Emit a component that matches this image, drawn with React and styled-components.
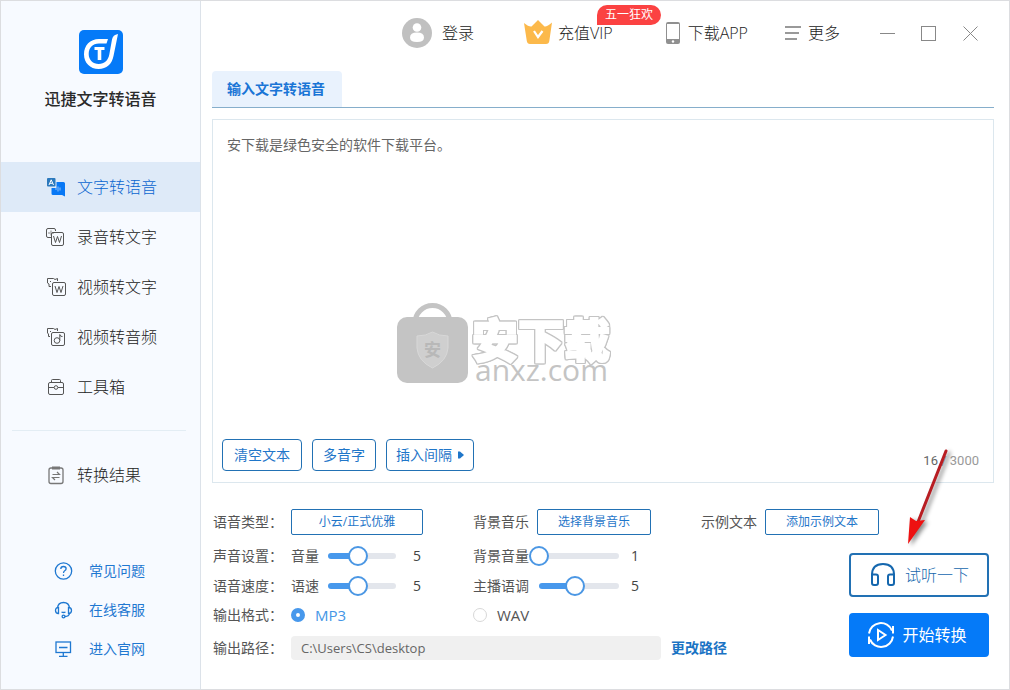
import React, { useState } from "react";
import styled, { createGlobalStyle } from "styled-components";

const GlobalStyle = createGlobalStyle`
  * {
    box-sizing: border-box;
  }
  body {
    margin: 0;
    background: #fff;
    color: #333;
    font-family: "Open Sans", "Noto Sans CJK SC", sans-serif;
    font-size: 14px;
    line-height: 20px;
  }
  button, input, textarea {
    font: inherit;
    color: inherit;
  }
  button {
    padding: 0;
    border: 0;
    background: none;
    cursor: pointer;
  }
  svg {
    display: block;
    flex: none;
  }
`;

const Window = styled.div`
  display: flex;
  min-height: 100vh;
  border: 1px solid #dcdde0;
`;

const Sidebar = styled.aside`
  flex: none;
  display: flex;
  flex-direction: column;
  width: 200px;
  background: #f7faff;
  border-right: 1px solid #dce2e9;
`;

const Brand = styled.div`
  display: flex;
  flex-direction: column;
  align-items: center;
  gap: 14px;
  height: 161px;
  padding-top: 29px;

  h1 {
    margin: 0;
    font-size: 16px;
    font-weight: 500;
    line-height: 22px;
    color: #2a2a2a;
  }
`;

const NavItem = styled.button`
  display: flex;
  align-items: center;
  gap: 11px;
  width: 100%;
  height: 50px;
  padding-left: 45px;
  font-size: 16px;
  font-weight: 300;
  color: ${({ $active }) => ($active ? "#0a66d0" : "#222")};
  background: ${({ $active }) => ($active ? "#deeaf8" : "transparent")};
`;

const Divider = styled.hr`
  width: 174px;
  margin: 18px 0 19px 11px;
  border: 0;
  border-top: 1px solid #e3edf4;
`;

const HelpLinks = styled.div`
  display: flex;
  flex-direction: column;
  gap: 19px;
  margin-top: auto;
  padding: 0 0 30px 52px;

  a {
    display: flex;
    align-items: center;
    gap: 16px;
    color: #1f78d1;
    text-decoration: none;
  }
`;

const Main = styled.main`
  flex: 1;
  display: flex;
  flex-direction: column;
  min-width: 0;
  padding: 0 15px 0 11px;
`;

const TopBar = styled.header`
  display: flex;
  justify-content: flex-end;
  align-items: center;
  height: 64px;
  font-size: 16px;
`;

const TopButton = styled.button`
  position: relative;
  display: flex;
  align-items: center;
  gap: ${({ $gap }) => $gap || 7}px;
  margin-right: ${({ $after }) => $after}px;
  font-weight: 300;
  color: #222;
`;

const Badge = styled.span`
  position: absolute;
  top: -14px;
  left: 73px;
  width: 64px;
  height: 20px;
  border-radius: 10px 10px 10px 0;
  background: #fb4242;
  color: #fff;
  font-size: 12px;
  font-weight: 400;
  line-height: 20px;
  text-align: center;
`;

const Tabs = styled.div`
  display: flex;
  margin-top: 6px;
  border-bottom: 1px solid #86aecb;
`;

const Tab = styled.button`
  height: 36px;
  padding: 0 17px 0 15px;
  border-radius: 4px 4px 0 0;
  background: #e9f2fd;
  color: #1a75d6;
  font-weight: 700;
`;

const Editor = styled.section`
  position: relative;
  flex: 1;
  display: flex;
  flex-direction: column;
  margin-top: 11px;
  border: 1px solid #dce7ee;

  textarea {
    flex: 1;
    width: 100%;
    padding: 15px 14px;
    border: 0;
    outline: 0;
    resize: none;
    background: transparent;
    color: #666;
  }
`;

const Watermark = styled.div`
  position: absolute;
  top: 183px;
  left: 184px;
  display: flex;
  align-items: flex-start;
  gap: 4px;
  color: #c4c4c4;
  pointer-events: none;
`;

const MarkName = styled.div`
  margin-top: 12px;
  color: #fff;
  font-family: "Noto Sans CJK SC", sans-serif;
  font-size: 46px;
  font-weight: 900;
  line-height: 45px;
  -webkit-text-stroke: 2px #fff;
  filter: drop-shadow(1px 0 0 #c4c4c4) drop-shadow(-1px 0 0 #c4c4c4)
    drop-shadow(0 1px 0 #c4c4c4) drop-shadow(0 -1px 0 #c4c4c4);
`;

const MarkSite = styled.div`
  padding-left: 3px;
  font-size: 30px;
  font-weight: 500;
  line-height: 20px;
`;

const EditorFoot = styled.div`
  display: flex;
  align-items: center;
  gap: 10px;
  padding: 0 14px 11px 9px;
`;

const OutlineButton = styled.button`
  display: flex;
  justify-content: center;
  align-items: center;
  gap: 6px;
  height: ${({ $small }) => ($small ? 26 : 32)}px;
  min-width: ${({ $width }) => $width || 0}px;
  padding: 0 ${({ $small }) => ($small ? 0 : 9)}px;
  border: 1px solid #2271b4;
  border-radius: ${({ $small }) => ($small ? 2 : 4)}px;
  background: #fff;
  color: #1f76c9;
  font-size: ${({ $small }) => ($small ? 12 : 14)}px;
`;

const Counter = styled.span`
  align-self: flex-end;
  margin-left: auto;
  color: #999;
  font-family: Roboto, sans-serif;
  font-size: 13px;

  b {
    color: #666;
    font-weight: 400;
  }
`;

const Settings = styled.section`
  position: relative;
  padding: 26px 0 29px 1px;
  color: #555;
`;

const Row = styled.div`
  display: grid;
  grid-template-columns: 78px 182px 1fr;
  align-items: center;
  height: ${({ $height }) => $height || 30}px;
`;

const Field = styled.div`
  display: flex;
  align-items: center;
`;

const FieldLabel = styled.label`
  flex: none;
  width: ${({ $width }) => $width || 64}px;
  margin-left: ${({ $before }) => $before || 0}px;
  white-space: nowrap;
`;

const Lower = styled.div`
  display: flex;
  margin-top: 6px;
`;

const Rows = styled.div`
  flex: 1;
  min-width: 0;
`;

const Track = styled.div.attrs(({ $percent }) => ({
  style: {
    background: `linear-gradient(to right, #4798ec ${$percent}%, #e3e6ec ${$percent}%)`,
  },
}))`
  display: flex;
  align-items: center;
  width: ${({ $width }) => $width}px;
  height: 6px;
  margin-left: 2px;
  border-radius: 3px;

  /* the thumb overhangs the track by half its width at both ends */
  input {
    flex: none;
    width: calc(100% + 20px);
    height: 20px;
    margin: 0 -10px;
    appearance: none;
    background: transparent;
  }
  input::-webkit-slider-thumb {
    appearance: none;
    width: 20px;
    height: 20px;
    border: 2px solid #4b97e4;
    border-radius: 50%;
    background: #fff;
  }
`;

const Value = styled.output`
  margin-left: ${({ $before }) => $before}px;
  color: #444;
`;

const RadioLabel = styled.label`
  display: flex;
  align-items: center;
  gap: 10px;
  color: ${({ $on }) => ($on ? "#4496e6" : "#555")};
  font-size: 15px;

  input {
    appearance: none;
    width: 14px;
    height: 14px;
    margin: 0;
    border: 1px solid #d8d8d8;
    border-radius: 50%;
    background: #fff;
  }
  input:checked {
    border: 5px solid #4798ec;
  }
`;

const PathRow = styled.div`
  display: grid;
  grid-template-columns: 78px 1fr 188px;
  align-items: center;
  margin-top: 8px;

  input {
    width: 100%;
    height: 24px;
    padding: 0 10px;
    border: 0;
    border-radius: 4px;
    background: #f0f0f0;
    color: #666;
    font-size: 13px;
  }
  a {
    margin-left: 10px;
    color: #1a73c4;
    font-weight: 700;
    text-decoration: none;
  }
`;

const Actions = styled.div`
  flex: none;
  display: flex;
  flex-direction: column;
  gap: 16px;
  width: 140px;
  margin: 12px 5px 0 0;
`;

const ActionButton = styled.button`
  display: flex;
  justify-content: center;
  align-items: center;
  gap: ${({ $primary }) => ($primary ? 7 : 8)}px;
  height: 44px;
  padding-right: ${({ $primary }) => ($primary ? 4 : 0)}px;
  border: 2px solid ${({ $primary }) => ($primary ? "#057af8" : "#2271b4")};
  border-radius: 4px;
  background: ${({ $primary }) => ($primary ? "#057af8" : "#fff")};
  color: ${({ $primary }) => ($primary ? "#fff" : "#1567ae")};
  font-size: 16px;
  font-weight: ${({ $primary }) => ($primary ? 400 : 300)};
`;

const Arrow = styled.svg`
  position: absolute;
  top: -37px;
  right: 38px;
  filter: drop-shadow(3px 2px 2px rgba(0, 0, 0, 0.45));
  pointer-events: none;
`;

function Svg({ size = 20, children, ...rest }) {
  return (
    <svg
      width={size}
      height={size}
      viewBox={`0 0 ${size} ${size}`}
      fill="none"
      stroke="currentColor"
      aria-hidden="true"
      {...rest}
    >
      {children}
    </svg>
  );
}

const Logo = () => (
  <Svg size={44} stroke="none">
    <rect width="44" height="44" rx="5" fill="#057af8" />
    <path
      d="M29 9L27.500 13.500H20C13.500 13.500 9.700 18 9.700 24C9.700 30 14 34 19.700 34C25.500 34 29 30.500 30.300 24.500L33 9.500C33.500 6.500 35.500 4.500 39 4L34.500 26C33 34 27.500 39 19.700 39C11 39 5 33 5 24.300C5 15.500 11 9 20 9Z"
      fill="#fff"
    />
    <path d="M15.500 17h10v3h-3.200V30h-3.600V20h-3.200z" fill="#fff" />
  </Svg>
);

const TextToVoiceIcon = () => (
  <Svg>
    <path
      d="M10.500 5H17.500Q19 5 19 6.500V19.500L16 18H7Q5.500 18 5.500 16.500V11H10.500Z"
      fill="#0878f5"
      stroke="none"
    />
    <rect x="1" y="1" width="8.500" height="8.500" rx="1" fill="#2b79bd" stroke="none" />
    <path d="M3 8L5.200 2.800L7.500 8M4 6.300H6.700" stroke="#fff" />
    <path d="M10 11v2M12 9.500v5M14 10.500v3" stroke="#8fc1fa" />
  </Svg>
);

const VoiceToTextIcon = () => (
  <Svg stroke="#555">
    <path d="M5 10.500H2Q0.500 10.500 0.500 9V3Q0.500 1.500 2 1.500H8Q9.500 1.500 9.500 3V4" />
    <path d="M3 5v2M5 3.500v5M7 5v2" stroke="#888" />
    <rect x="5.500" y="5.500" width="12" height="13" rx="1.500" />
    <path d="M7.500 9L9.500 15.500L11.500 9.500L13.500 15.500L15.500 9" />
  </Svg>
);

const VideoToTextIcon = () => (
  <Svg stroke="#555">
    <path d="M5 9.500H3V7L1.500 6V1.500H7.500L9 2.500L11.500 1.500V4" />
    <path d="M4 4.500h1" />
    <rect x="6.500" y="5.500" width="13" height="13" rx="1.500" />
    <path d="M9 9L11 15.500L13 9.500L15 15.500L17 9" />
  </Svg>
);

const VideoToAudioIcon = () => (
  <Svg stroke="#555">
    <path d="M4 9.500H2.500V7L1.500 6V1.500H7.500L9 2.500L11.500 1.500V4" />
    <path d="M4 4.500h1" />
    <rect x="5.500" y="5.500" width="13" height="13" rx="1.500" />
    <circle cx="11" cy="13.500" r="2.800" />
    <path d="M13.800 13.500V7.500Q14.500 10 16.500 9.500" />
  </Svg>
);

const ToolboxIcon = () => (
  <Svg stroke="#555">
    <path d="M5.500 5.500V3.500Q5.500 2.500 6.500 2.500H13.500Q14.500 2.500 14.500 3.500V5.500" />
    <rect x="2.500" y="5.500" width="15" height="12" rx="1.500" />
    <path d="M2.500 10.500H8M12 10.500H17.500" />
    <circle cx="10" cy="10.500" r="1.800" />
  </Svg>
);

const ResultIcon = () => (
  <Svg stroke="#777">
    <rect x="3" y="3" width="14" height="15.500" rx="2" strokeWidth="1.300" />
    <path d="M6 3h8" strokeWidth="3" />
    <path d="M6.500 9.500H13.500L11 7M13.500 12.500H6.500L9 15" strokeWidth="1.200" />
  </Svg>
);

const HelpIcon = () => (
  <Svg strokeWidth="1.300">
    <circle cx="10.500" cy="10" r="8.200" />
    <path d="M7.800 8Q7.800 5.500 10.500 5.500Q13.100 5.500 13.100 7.700Q13.100 9 11.700 9.800Q10.500 10.500 10.500 12M10.500 13.500v1.500" />
  </Svg>
);

const ServiceIcon = () => (
  <Svg strokeWidth="1.300">
    <path d="M4.500 8Q5 2.500 10.500 2.500Q16 2.500 16.500 8" />
    <path d="M5.500 7.500Q2.500 7.500 2.500 10.500Q2.500 13.500 5.500 13.500ZM15.500 7.500Q18.500 7.500 18.500 10.500Q18.500 13.500 15.500 13.500Z" />
    <path d="M16.500 13.500Q16 16.500 12 16.500M8.500 12Q10.500 13 12.500 12" />
    <circle cx="10.500" cy="16.500" r="1.400" />
  </Svg>
);

const SiteIcon = () => (
  <Svg strokeWidth="1.300">
    <rect x="3" y="3" width="14.500" height="10.500" />
    <path d="M6 8.500h8.500M10.300 13.500V17M6 17.300h8.500" />
  </Svg>
);

const UserIcon = () => (
  <Svg size={30} stroke="none">
    <circle cx="15" cy="15" r="15" fill="#c0c0c0" />
    <circle cx="15" cy="9.500" r="4.300" fill="#fff" />
    <path d="M8 19.500Q8 14.500 15 14.500Q22 14.500 22 19.500Q22 24 15 24Q8 24 8 19.500Z" fill="#fff" />
  </Svg>
);

const CrownIcon = () => (
  <Svg size={28} stroke="none">
    <path
      d="M0 4Q5 8 7.500 7.500L14 1L20.500 7.500Q23 8 28 3.500L25.300 22Q25 25 22 25H6Q3.300 25 2.800 22Z"
      fill="#fcb94b"
    />
    <path d="M10 12L14 18L18.500 12" stroke="#fff" strokeWidth="2.200" />
  </Svg>
);

const PhoneIcon = () => (
  <svg width="14" height="22" viewBox="0 0 14 22" aria-hidden="true">
    <rect width="14" height="22" rx="2" fill="#909090" />
    <rect x="1" y="2" width="12" height="15" fill="#fff" />
    <circle cx="7" cy="19.500" r="1.200" fill="#fff" />
  </svg>
);

const MoreIcon = () => (
  <Svg size={16} stroke="#999" strokeWidth="2">
    <path d="M0 2H16M0 8H14M0 14H12" />
  </Svg>
);

const HeadphoneIcon = () => (
  <Svg size={28} strokeWidth="2">
    <path d="M3 18V14Q3 3 14 3Q25 3 25 14V18" />
    <path d="M3 13.500H7Q9 13.500 9 15.500V22Q9 24 7 24H5Q3 24 3 22ZM25 13.500H21Q19 13.500 19 15.500V22Q19 24 21 24H23Q25 24 25 22Z" />
  </Svg>
);

const ConvertIcon = () => (
  <Svg size={28} strokeWidth="2">
    <path d="M2 12.500A12 12 0 0 1 25 9.500M26 5v7.500M26 15.500A12 12 0 0 1 3 18.500M2 23v-7.500" />
    <path d="M11 9L18.500 14L11 19Z" />
  </Svg>
);

const NAV = [
  { name: "文字转语音", icon: TextToVoiceIcon },
  { name: "录音转文字", icon: VoiceToTextIcon },
  { name: "视频转文字", icon: VideoToTextIcon },
  { name: "视频转音频", icon: VideoToAudioIcon },
  { name: "工具箱", icon: ToolboxIcon },
];

const HELP = [
  { name: "常见问题", icon: HelpIcon },
  { name: "在线客服", icon: ServiceIcon },
  { name: "进入官网", icon: SiteIcon },
];

function RangeField({ id, label, labelWidth, width, before, initial }) {
  const [value, setValue] = useState(initial);
  return (
    <Field>
      <FieldLabel htmlFor={id} $width={labelWidth}>
        {label}
      </FieldLabel>
      <Track $width={width} $percent={((value - 1) / 9) * 100}>
        <input
          id={id}
          type="range"
          min="1"
          max="10"
          value={value}
          onChange={(e) => setValue(Number(e.target.value))}
        />
      </Track>
      <Value htmlFor={id} $before={before}>
        {value}
      </Value>
    </Field>
  );
}

function SideMenu() {
  const [active, setActive] = useState("文字转语音");
  return (
    <Sidebar>
      <Brand>
        <Logo />
        <h1>迅捷文字转语音</h1>
      </Brand>
      <nav>
        {NAV.map(({ name, icon: Icon }) => (
          <NavItem key={name} $active={name === active} onClick={() => setActive(name)}>
            <Icon />
            {name}
          </NavItem>
        ))}
        <Divider />
        <NavItem>
          <ResultIcon />
          转换结果
        </NavItem>
      </nav>
      <HelpLinks>
        {HELP.map(({ name, icon: Icon }) => (
          <a key={name} href="#help">
            <Icon />
            {name}
          </a>
        ))}
      </HelpLinks>
    </Sidebar>
  );
}

function Header() {
  return (
    <TopBar>
      <TopButton $after={50} $gap={10}>
        <UserIcon />
        登录
      </TopButton>
      <TopButton $after={53} $gap={6}>
        <CrownIcon />
        充值VIP
        <Badge>五一狂欢</Badge>
      </TopButton>
      <TopButton $after={37} $gap={8}>
        <PhoneIcon />
        下载APP
      </TopButton>
      <TopButton $after={40}>
        <MoreIcon />
        更多
      </TopButton>
      <TopButton $after={26} aria-label="最小化">
        <Svg size={15} stroke="#888">
          <path d="M0 7.500H15" />
        </Svg>
      </TopButton>
      <TopButton $after={27} aria-label="最大化">
        <Svg size={15} stroke="#888">
          <rect x="0.500" y="0.500" width="14" height="14" />
        </Svg>
      </TopButton>
      <TopButton $after={16} aria-label="关闭">
        <Svg size={15} stroke="#888">
          <path d="M0.500 0.500L14.500 14.500M14.500 0.500L0.500 14.500" />
        </Svg>
      </TopButton>
    </TopBar>
  );
}

function TextEditor() {
  const [text, setText] = useState("安下载是绿色安全的软件下载平台。");
  return (
    <Editor>
      <Watermark>
        <svg width="71" height="80" viewBox="0 0 71 80" aria-hidden="true">
          <path d="M18 20A17.500 17.500 0 0 1 53 20" fill="none" stroke="#c4c4c4" strokeWidth="5" />
          <rect y="14" width="71" height="66" rx="10" fill="#c4c4c4" />
          <path
            d="M35.500 29Q42 33 51 33V45Q50 58 35.500 65Q21 58 20 45V33Q29 33 35.500 29Z"
            fill="#cfcfcf"
            stroke="#d8d8d8"
          />
          <text
            x="35.500"
            y="53"
            textAnchor="middle"
            fontSize="17"
            fontWeight="700"
            fontFamily="Noto Sans CJK SC, sans-serif"
            fill="#b8b8b8"
          >
            安
          </text>
        </svg>
        <div>
          <MarkName>安下载</MarkName>
          <MarkSite>anxz.com</MarkSite>
        </div>
      </Watermark>
      <textarea
        aria-label="输入文字"
        maxLength={3000}
        spellCheck={false}
        value={text}
        onChange={(e) => setText(e.target.value)}
      />
      <EditorFoot>
        <OutlineButton $width={80} onClick={() => setText("")}>
          清空文本
        </OutlineButton>
        <OutlineButton $width={64}>多音字</OutlineButton>
        <OutlineButton $width={88}>
          插入间隔
          <svg width="6" height="8" viewBox="0 0 6 8" aria-hidden="true">
            <path d="M0 0.500H2L6 4L2 7.500H0Z" fill="#1f76c9" />
          </svg>
        </OutlineButton>
        <Counter>
          <b>{text.length}</b> / 3000
        </Counter>
      </EditorFoot>
    </Editor>
  );
}

function VoiceSettings() {
  const [format, setFormat] = useState("MP3");
  return (
    <Settings>
      <Row $height={26}>
        <label htmlFor="voice">语音类型：</label>
        <Field>
          <OutlineButton id="voice" $small $width={132}>
            小云/正式优雅
          </OutlineButton>
        </Field>
        <Field>
          <FieldLabel htmlFor="music">背景音乐</FieldLabel>
          <OutlineButton id="music" $small $width={114}>
            选择背景音乐
          </OutlineButton>
          <FieldLabel htmlFor="sample" $before={50}>
            示例文本
          </FieldLabel>
          <OutlineButton id="sample" $small $width={114}>
            添加示例文本
          </OutlineButton>
        </Field>
      </Row>
      <Lower>
        <Rows>
          <Row>
            <span>声音设置：</span>
            <RangeField id="volume" label="音量" labelWidth={35} width={68} before={17} initial={5} />
            <RangeField id="musicVolume" label="背景音量" width={80} before={12} initial={1} />
          </Row>
          <Row>
            <span>语音速度：</span>
            <RangeField id="speed" label="语速" labelWidth={35} width={68} before={17} initial={5} />
            <RangeField id="tone" label="主播语调" width={80} before={12} initial={5} />
          </Row>
          <Row $height={27}>
            <span>输出格式：</span>
            {["MP3", "WAV"].map((name) => (
              <RadioLabel key={name} $on={format === name}>
                <input
                  type="radio"
                  name="format"
                  checked={format === name}
                  onChange={() => setFormat(name)}
                />
                {name}
              </RadioLabel>
            ))}
          </Row>
          <PathRow>
            <label htmlFor="path">输出路径：</label>
            <input id="path" type="text" readOnly value="C:\Users\CS\desktop" />
            <a href="#path">更改路径</a>
          </PathRow>
        </Rows>
        <Actions>
          <ActionButton>
            <HeadphoneIcon />
            试听一下
          </ActionButton>
          <ActionButton $primary>
            <ConvertIcon />
            开始转换
          </ActionButton>
        </Actions>
      </Lower>
      <Arrow width="52" height="104" viewBox="0 0 52 104" aria-hidden="true">
        <path d="M42 5L14 76" stroke="#b81d22" strokeWidth="3" strokeLinecap="round" />
        <path d="M4 98L6 71L12 75L21 74Z" fill="#ee1111" />
      </Arrow>
    </Settings>
  );
}

function App() {
  return (
    <Window>
      <GlobalStyle />
      <SideMenu />
      <Main>
        <Header />
        <Tabs>
          <Tab>输入文字转语音</Tab>
        </Tabs>
        <TextEditor />
        <VoiceSettings />
      </Main>
    </Window>
  );
}

export default App;
